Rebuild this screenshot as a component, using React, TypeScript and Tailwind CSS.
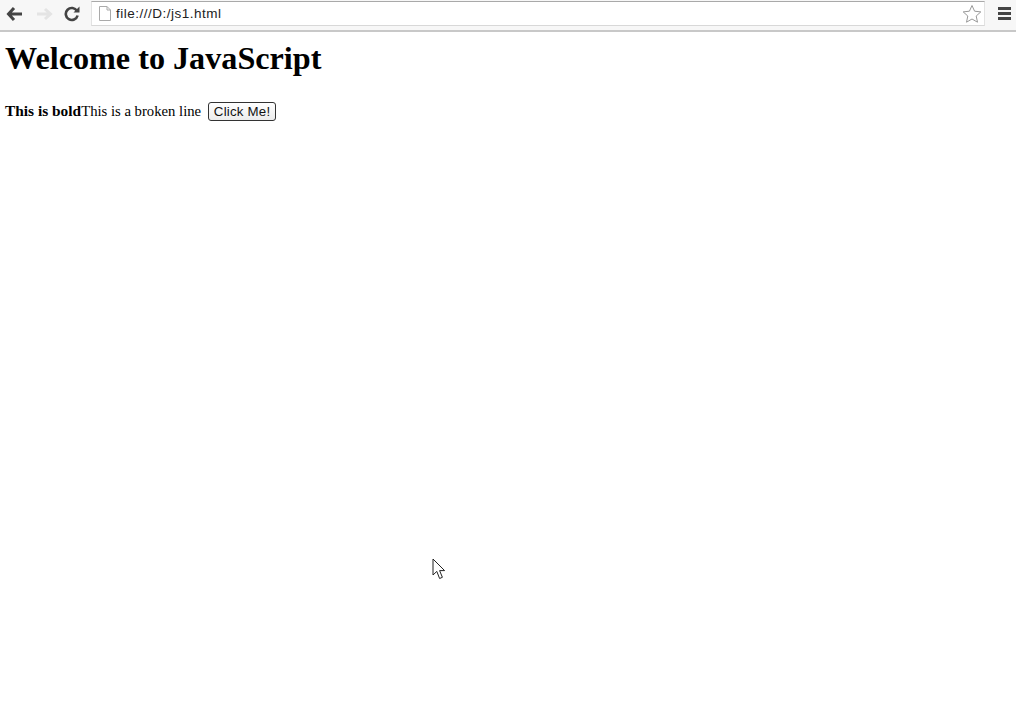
import React from "react";

const Back = () => (
  <svg width="18" height="16" viewBox="0 0 18 16" className="block">
    <path d="M8 2 L2.5 8 L8 14 M3 8 H16" fill="none" stroke="#444" strokeWidth="3" />
  </svg>
);

const Forward = () => (
  <svg width="18" height="16" viewBox="0 0 18 16" className="block">
    <path d="M10 3 L15.5 8 L10 13 M2 8 H15" fill="none" stroke="#e4e4e4" strokeWidth="3" />
  </svg>
);

const Reload = () => (
  <svg width="16" height="16" viewBox="0 0 16 16" className="block">
    <path d="M13 5 A6 6 0 1 0 13.6 9.5" fill="none" stroke="#444" strokeWidth="2.6" />
    <path d="M9.5 6.5 H15.5 V0.5 Z" fill="#444" />
  </svg>
);

const PageIcon = () => (
  <svg width="12" height="15" viewBox="0 0 12 15" className="block">
    <path d="M0.5 0.5 H8 L11.5 4 V14.5 H0.5 Z M8 0.5 V4 H11.5" fill="#fff" stroke="#aaa" />
  </svg>
);

const Star = () => (
  <svg width="20" height="20" viewBox="0 0 20 20" className="block">
    <path d="M10 1.5 L12.6 7.2 L18.8 7.9 L14.2 12 L15.5 18.2 L10 15 L4.5 18.2 L5.8 12 L1.2 7.9 L7.4 7.2 Z" fill="#fff" stroke="#999" strokeWidth="1" />
  </svg>
);

const Cursor = () => (
  <svg width="14" height="22" viewBox="0 0 14 22" className="block">
    <path d="M1 1 V17 L4.8 13.4 L7.6 20.5 L10.4 19.3 L7.6 12.6 H12.6 Z" fill="#fff" stroke="#222" strokeWidth="1" />
  </svg>
);

export default function App() {
  return (
    <div className="relative min-h-[706px] overflow-hidden bg-white text-black font-['Liberation_Serif',serif]">
      <div className="flex h-8 items-start border-b-2 border-[#c8c8c8] bg-[#f7f7f7] font-['Liberation_Sans',sans-serif]">
        <div className="flex w-[91px] items-center gap-[11px] pl-[6px] pt-[6px]">
          <Back />
          <Forward />
          <Reload />
        </div>
        <div className="mt-px flex h-[25px] flex-1 items-center border-y border-t-[#a9a9a9] border-b-[#d8d8d8] border-x border-x-[#e2e2e2] bg-white pl-[7px] pr-[2px]">
          <PageIcon />
          <span className="ml-[5px] flex-1 pt-px text-[13.5px] tracking-[0.5px] text-[#222]">file:///D:/js1.html</span>
          <Star />
        </div>
        <div className="flex w-[31px] flex-col items-center gap-[2px] pl-[7px] pt-[7px]">
          <div className="h-[3px] w-[13px] bg-[#444]" />
          <div className="h-[3px] w-[13px] bg-[#444]" />
          <div className="h-[3px] w-[13px] bg-[#444]" />
        </div>
      </div>
      <div className="px-[5px]">
        <h1 className="mt-[8px] text-[32.2px] leading-[37px] font-bold">Welcome to JavaScript</h1>
        <div className="mt-[24px] flex items-center leading-[20px]">
          <b className="text-[15.4px]">This is bold</b>
          <span className="text-[14.7px]">This is a broken line</span>
          <button className="ml-[7px] h-[19px] w-[68px] rounded-[3px] border border-[#333] bg-gradient-to-b from-white to-[#ececec] pt-px font-['Liberation_Sans',sans-serif] text-[13.3px] tracking-[0.2px] leading-none text-[#111]">
            Click Me!
          </button>
        </div>
      </div>
      <div className="absolute left-[432px] top-[558px]">
        <Cursor />
      </div>
    </div>
  );
}
